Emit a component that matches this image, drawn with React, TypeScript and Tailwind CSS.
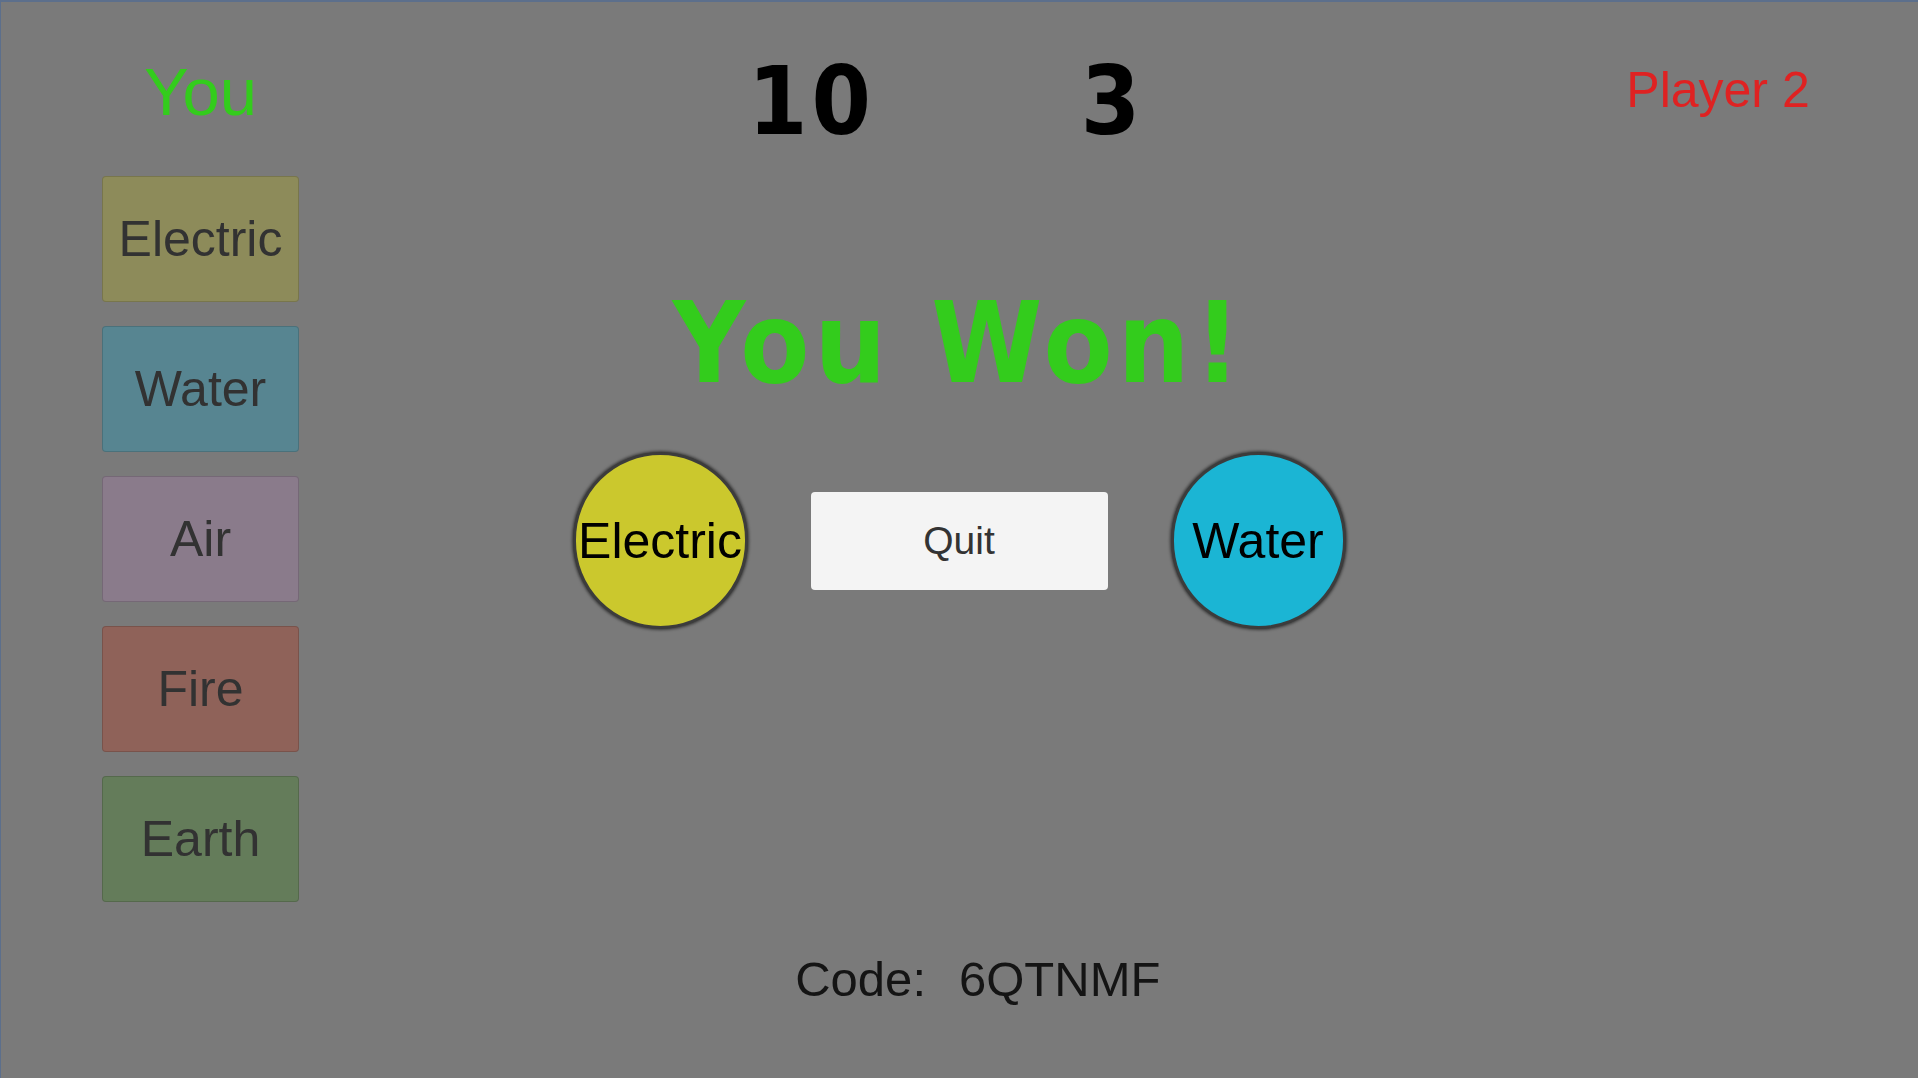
import React from 'react';

type Element = {
  name: string;
  color: string;
};

const elements: Element[] = [
  { name: "Electric", color: "bg-[#8d8b5a]" },
  { name: "Water", color: "bg-[#578591]" },
  { name: "Air", color: "bg-[#8a7b8b]" },
  { name: "Fire", color: "bg-[#8f6259]" },
  { name: "Earth", color: "bg-[#647c5a]" },
];

const ElementCard = ({ name, color }: Element) => (
  <div
    className={`w-[197px] h-[126px] flex items-center justify-center rounded-[4px] border border-black/15 ${color}`}
  >
    <span className="text-[50px] leading-none text-[#323232]">{name}</span>
  </div>
);

const Orb = ({ label, color }: { label: string; color: string }) => (
  <div
    className={`w-[175px] h-[177px] rounded-full flex items-center justify-center border-[3px] border-[#3c3c3c] shadow-[0_0_3px_1px_rgba(0,0,0,0.55)] ${color}`}
  >
    <span className="text-[50px] leading-none text-black whitespace-nowrap">{label}</span>
  </div>
);

export default function App() {
  const display = "font-['DejaVu_Sans_Condensed','DejaVu_Sans',sans-serif] font-bold font-stretch-condensed";

  return (
    <div className="w-[1918px] h-[1078px] bg-[#7a7a7a] border-t-2 border-l border-[#5c6f8c] overflow-hidden font-['Liberation_Sans',Arial,sans-serif]">
      <div className="grid grid-cols-[399px_1118px_400px] h-full">
        {/* left: you + element picks */}
        <div className="flex flex-col items-center pt-[56px]">
          <div className="text-[67px] leading-none text-[#33cc1c]">You</div>
          <div className="flex flex-col gap-[24px] mt-[51px]">
            {elements.map((el) => (
              <ElementCard key={el.name} {...el} />
            ))}
          </div>
        </div>

        {/* center: scores, result, round */}
        <div className="flex flex-col items-center pt-[52px]">
          <div className={`flex gap-[147px] text-[95px] leading-none text-black tracking-[4px] ${display}`}>
            <div className="w-[150px] text-center pl-[2px]">10</div>
            <div className="w-[150px] text-center pl-[10px]">3</div>
          </div>

          <div className={`mt-[138px] text-[112px] leading-none text-[#33cc1c] tracking-[5px] ${display}`}>
            You Won!
          </div>

          <div className="mt-[53px] flex items-center gap-[63px]">
            <Orb label="Electric" color="bg-[#cbc82d]" />
            <button className="w-[297px] h-[98px] rounded-[4px] bg-[#f4f4f4] text-[39px] leading-none text-[#333333]">
              Quit
            </button>
            <Orb label="Water" color="bg-[#1bb5d4]" />
          </div>

          <div className="mt-[326px] grid grid-cols-2 w-full text-[49px] leading-none text-[#141414]">
            <div className="text-right pr-[33px]">Code:</div>
            <div>6QTNMF</div>
          </div>
        </div>

        {/* right: opponent */}
        <div className="flex justify-center pt-[63px]">
          <div className="text-[50px] leading-none text-[#df2222]">Player 2</div>
        </div>
      </div>
    </div>
  );
}
